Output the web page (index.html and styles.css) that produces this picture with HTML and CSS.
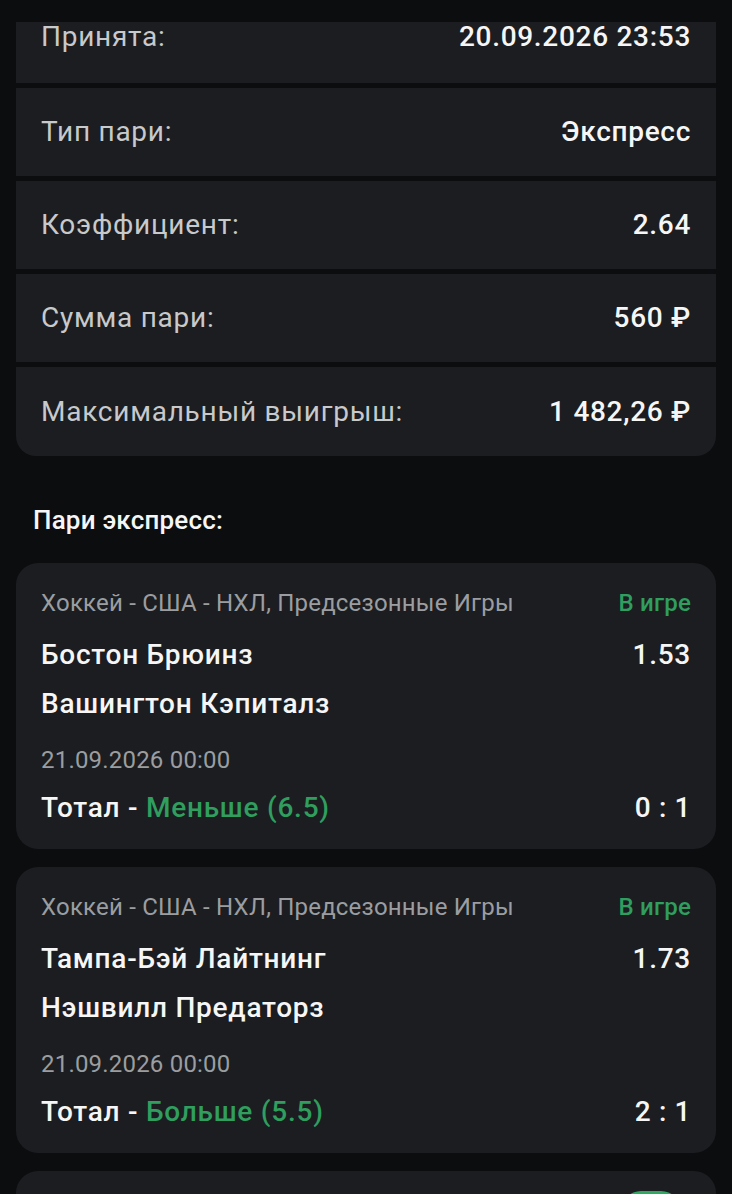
FILE: index.html
```html
<!DOCTYPE html>
<html lang="ru">
<head>
<meta charset="utf-8">
<title>Пари</title>
<link rel="stylesheet" href="styles.css">
</head>
<body>
<div class="page">
  <section class="summary">
    <div class="row row-first"><span class="label">Принята:</span><span class="value">20.09.2026 23:53</span></div>
    <div class="row"><span class="label">Тип пари:</span><span class="value">Экспресс</span></div>
    <div class="row"><span class="label">Коэффициент:</span><span class="value">2.64</span></div>
    <div class="row"><span class="label">Сумма пари:</span><span class="value">560 ₽</span></div>
    <div class="row row-last"><span class="label">Максимальный выигрыш:</span><span class="value">1 482,26 ₽</span></div>
  </section>

  <h2 class="section-title">Пари экспресс:</h2>

  <div class="bets">
    <article class="bet">
      <div class="bet-head"><span class="cat">Хоккей - США - НХЛ, Предсезонные Игры</span><span class="status">В игре</span></div>
      <div class="team team-1"><span>Бостон Брюинз</span><span>1.53</span></div>
      <div class="team team-2"><span>Вашингтон Кэпиталз</span></div>
      <div class="date">21.09.2026 00:00</div>
      <div class="outcome"><span>Тотал - <span class="green">Меньше (6.5)</span></span><span class="score">0 : 1</span></div>
    </article>

    <article class="bet">
      <div class="bet-head"><span class="cat">Хоккей - США - НХЛ, Предсезонные Игры</span><span class="status">В игре</span></div>
      <div class="team team-1"><span>Тампа-Бэй Лайтнинг</span><span>1.73</span></div>
      <div class="team team-2"><span>Нэшвилл Предаторз</span></div>
      <div class="date">21.09.2026 00:00</div>
      <div class="outcome"><span>Тотал - <span class="green">Больше (5.5)</span></span><span class="score">2 : 1</span></div>
    </article>

    <article class="bet">
      <div class="bet-head bet-head-pill"><span class="cat">Хоккей - США - НХЛ, Предсезонные Игры</span><span class="pill"></span></div>
    </article>
  </div>
</div>
</body>
</html>
```

FILE: styles.css
```css
html, body {
  margin: 0;
  padding: 0;
  background: #0c0d0f;
}
body {
  font-family: Roboto, "Noto Sans", "Liberation Sans", sans-serif;
  color: #f4f4f5;
  height: 1194px;
  overflow: hidden;
}
.page {
  padding: 22px 16px 0;
}
.summary {
  display: flex;
  flex-direction: column;
  gap: 5px;
}
.row {
  background: #1b1d20;
  height: 88px;
  padding: 0 25px;
  display: flex;
  align-items: center;
  justify-content: space-between;
  font-size: 28px;
  line-height: 30px;
}
.row-first {
  height: 61px;
  align-items: flex-start;
}
.row-last {
  height: 89px;
  border-radius: 0 0 20px 20px;
}
.label {
  color: #c8c9cb;
  letter-spacing: 0.75px;
}
.value {
  color: #f6f6f6;
  font-weight: 500;
  letter-spacing: 0.7px;
}
.section-title {
  margin: 0;
  padding: 49px 17px 0;
  height: 30px;
  font-size: 26px;
  line-height: 30px;
  font-weight: 500;
  color: #f6f6f6;
  letter-spacing: 0.2px;
}
.bets {
  margin-top: 28px;
  display: flex;
  flex-direction: column;
  gap: 18px;
}
.bet {
  background: #1b1d20;
  border-radius: 22px;
  padding: 25px 25px 24px;
}
.bet-head {
  display: flex;
  justify-content: space-between;
  align-items: center;
  font-size: 24px;
  line-height: 30px;
  letter-spacing: 0.2px;
}
.cat {
  color: #9b9da0;
}
.status {
  color: #2f9e5e;
  font-weight: 500;
}
.team {
  display: flex;
  justify-content: space-between;
  font-size: 28px;
  line-height: 34px;
  font-weight: 500;
  color: #f6f6f6;
  letter-spacing: 0.75px;
}
.team-1 { margin-top: 20px; }
.team-2 { margin-top: 15px; }
.date {
  margin-top: 24px;
  font-size: 24px;
  line-height: 30px;
  color: #9b9da0;
  letter-spacing: 0.2px;
}
.outcome {
  margin-top: 16px;
  display: flex;
  justify-content: space-between;
  font-size: 28px;
  line-height: 34px;
  font-weight: 500;
  color: #f6f6f6;
  letter-spacing: 0.75px;
}
.green {
  color: #2f9e5e;
}
.score {
  letter-spacing: 0.6px;
}
.bet-head-pill {
  margin-top: -5px;
}
.pill {
  background: #2fa862;
  border-radius: 20px;
  width: 60px;
  height: 40px;
  margin-right: 10px;
}
```
